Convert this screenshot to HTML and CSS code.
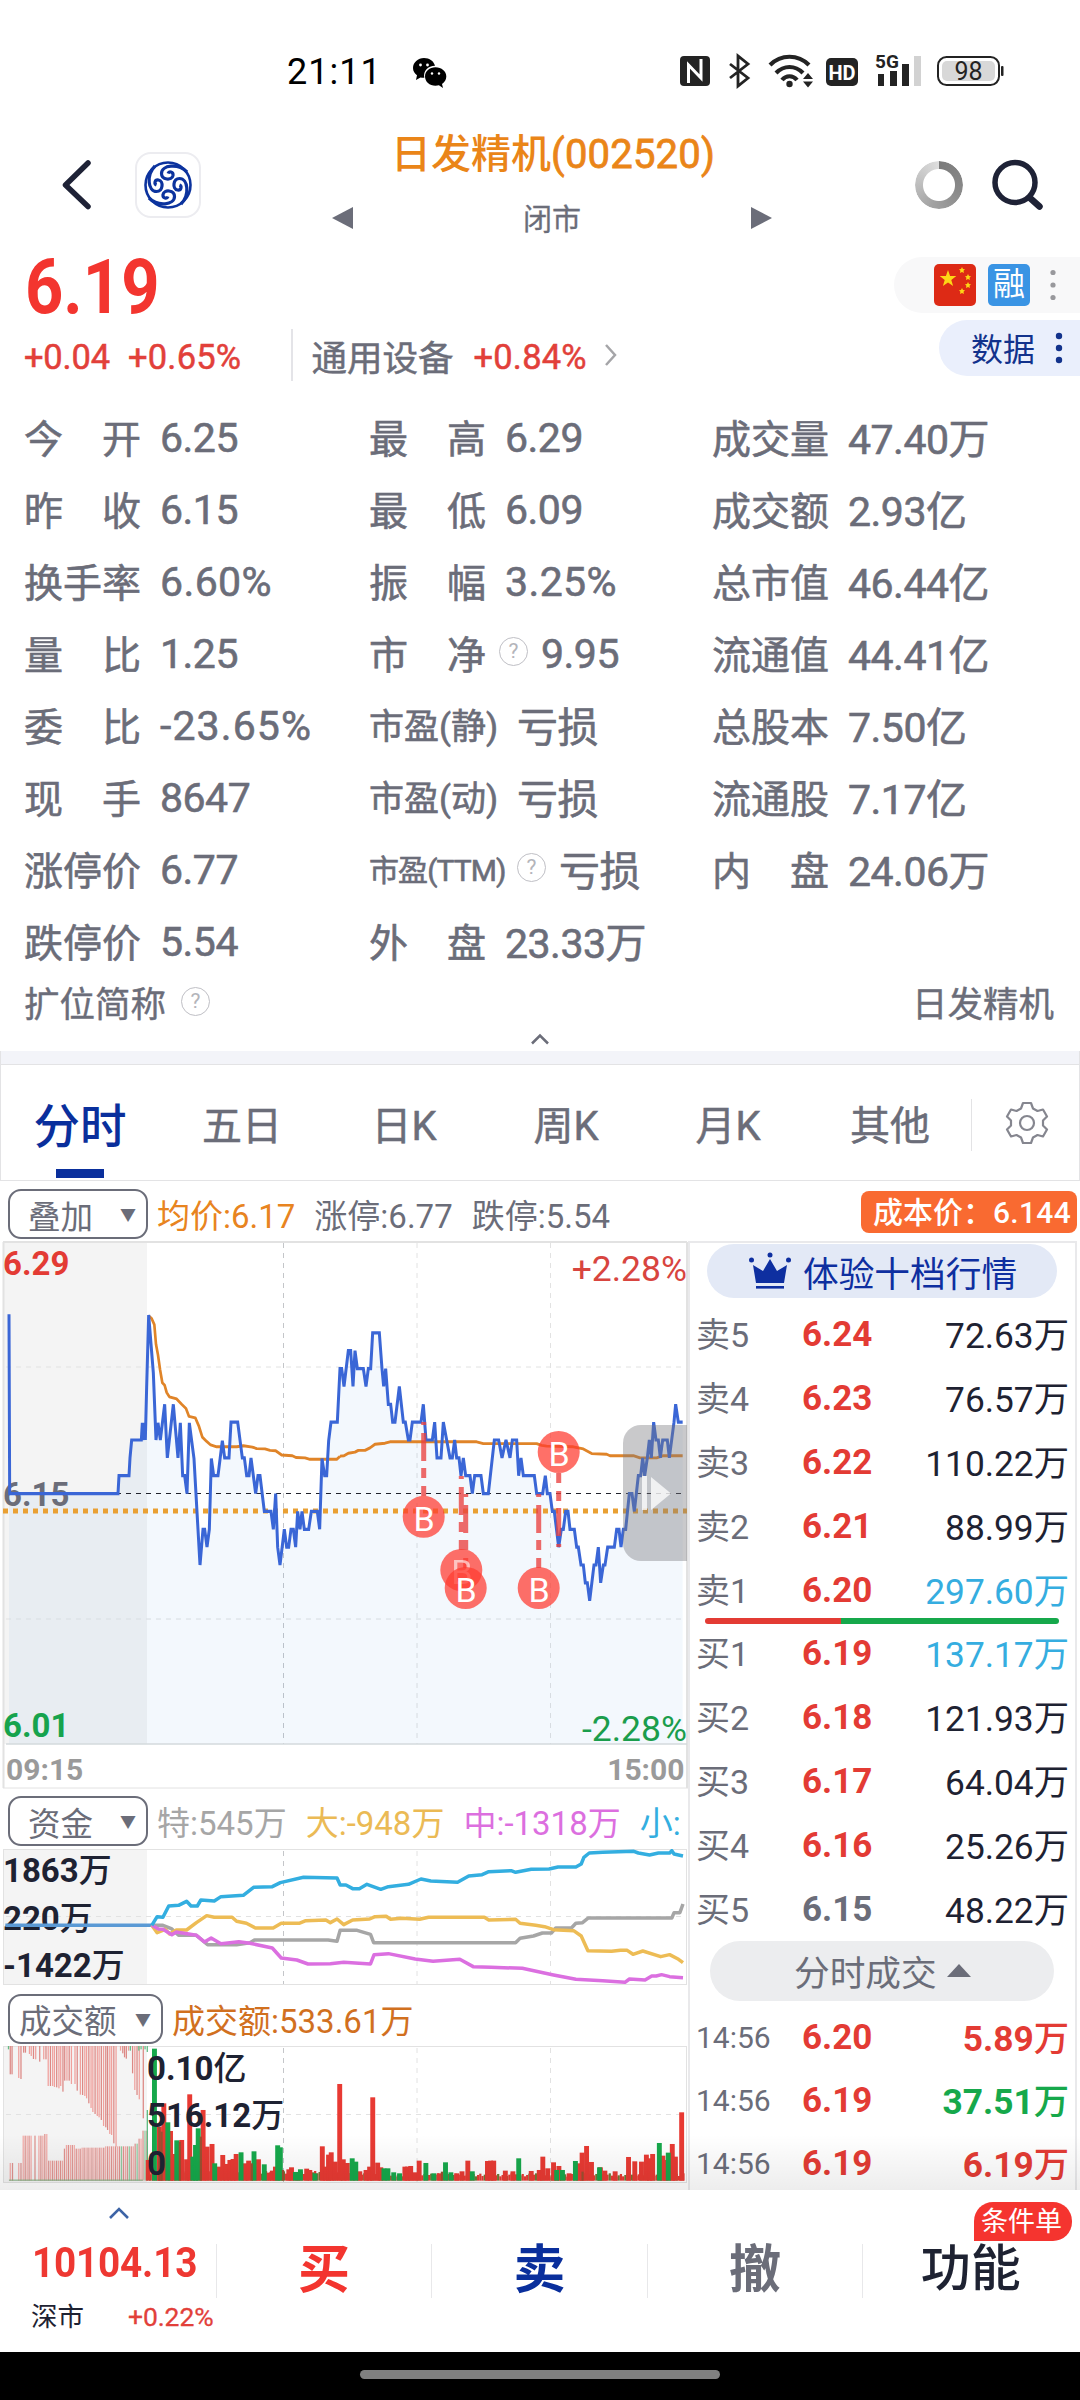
FILE: index.html
```html
<!DOCTYPE html>
<html lang="zh-CN">
<head>
<meta charset="utf-8">
<title>日发精机(002520)</title>
<link rel="stylesheet" href="styles.css">
</head>
<body>
<div class="status">
  <div class="clock">21:11</div>
  <svg class="wechat" width="34" height="30" viewBox="0 0 34 30"><path d="M11 0C5 0 0 4.500 0 10c0 3 1.500 5.500 4 7.300L3 22l4.500-2.600c1.200.3 2.500.5 3.800.4C10 13 15 8 22 7.800 21 3.200 16.500 0 11 0z"/><path d="M22.500 9.300c-6 0-10.500 4.100-10.500 9.200s4.500 9.200 10.500 9.200c1.200 0 2.400-.2 3.400-.5L30 30l-1-4c2.600-1.800 4.300-4.500 4.300-7.500 0-5.100-4.800-9.200-10.800-9.200z"/><g fill="#fff"><circle cx="7.500" cy="7" r="1.400"/><circle cx="14.500" cy="7" r="1.400"/><circle cx="19" cy="15.500" r="1.200"/><circle cx="26" cy="15.500" r="1.200"/></g></svg>
  <svg class="sys" width="330" height="40" viewBox="676 50 330 40" fill="#232323">
    <rect x="680" y="56" width="30" height="30" rx="4"/><path d="M688.500 83V65l12.500 13V59" fill="none" stroke="#fff" stroke-width="3"/>
    <path d="M730 64l18 14-10 8V56l10 8-18 14" fill="none" stroke="#232323" stroke-width="2.800"/>
    <g fill="none" stroke="#232323" stroke-width="4.200"><path d="M770 65c11-11 28-11 39 0"/><path d="M776 73c8-8 19-8 27 0"/><path d="M782 80c4-5 11-5 15 0"/></g><circle cx="789.500" cy="84" r="3.200"/><path d="M803 79l5-6 5 6zm0 2.500h10l-5 6z"/>
    <rect x="826" y="58" width="32" height="28" rx="5"/><text x="842" y="79.500" class="hd" fill="#fff">HD</text>
    <text x="875" y="68" class="g5">5G</text>
    <path d="M878 74h6v12h-6zM890 71h7v15h-7zM902 64h7v22h-7z"/><path d="M914 56h7v30h-7z" fill="#d2d2d2"/>
    <rect x="938" y="57" width="61" height="28" rx="8.500" fill="#fff" stroke="#232323" stroke-width="2"/><rect x="942" y="61" width="53" height="20" rx="5" fill="#d8d8d8"/><rect x="1001" y="66" width="2.500" height="10" rx="1"/><text x="968.500" y="80" class="bat">98</text>
  </svg>
</div>

<header class="head">
  <svg class="back" width="30" height="52" viewBox="62 159 30 52"><path d="M88 163L65.500 185 88 206.500" fill="none" stroke="#1e2236" stroke-width="5.500" stroke-linecap="round" stroke-linejoin="round"/></svg>
  <div class="logo"><svg width="52" height="52" viewBox="-26 -26 52 52"><g fill="none" stroke="#0c339e" stroke-width="3.200"><circle r="22.500" stroke-width="2.600"/><path id="s" d="M19-13C10-22-6.500-20-6.500-11.500-6.500-5 4-4 5-9.500 5.500-13.500 1-14 0-11.500"/><use href="#s" transform="rotate(90)"/><use href="#s" transform="rotate(180)"/><use href="#s" transform="rotate(270)"/></g></svg></div>
  <div class="title">
    <div class="name">日发精机<span>(002520)</span></div>
    <div class="sub"><svg width="21" height="22"><path d="M21 0v22L0 11z" fill="#6b6d79"/></svg><span>闭市</span><svg width="21" height="22"><path d="M0 0v22l21-11z" fill="#6b6d79"/></svg></div>
  </div>
  <div class="ring"></div>
  <svg class="search" width="54" height="54" viewBox="990 158 54 54"><circle cx="1015" cy="182.500" r="20" fill="none" stroke="#1e2236" stroke-width="5.500"/><path d="M1030 198l9.500 8.500" stroke="#1e2236" stroke-width="6.500" stroke-linecap="round"/></svg>
</header>

<section class="quote">
  <div class="left">
    <div class="price">6.19</div>
    <div class="chg"><span class="c1">+0.04</span><span class="c2">+0.65%</span><i></i><b>通用设备</b><span class="c3">+0.84%</span><svg width="14" height="22" viewBox="0 0 14 22"><path d="M2 1l9 10-9 10" fill="none" stroke="#a5a5a8" stroke-width="2.500"/></svg></div>
  </div>
  <div class="pills">
    <div class="pill1"><svg width="42" height="42" viewBox="0 0 42 42"><rect width="42" height="42" rx="5" fill="#dd2a15"/><g fill="#fdd616"><path d="M14 6l2.100 6h6.200l-5 3.900 1.800 6.100L14 18.400 8.900 22l1.800-6.100-5-3.900h6.200z"/><path d="M28 3l1 2 2 .3-1.500 1.500.4 2.200-1.900-1-2 1 .4-2.200L25 5.300l2-.3zM34 10l1 2 2 .3-1.500 1.500.4 2.200-1.900-1-2 1 .4-2.200-1.400-1.500 2-.3zM34 18l1 2 2 .3-1.500 1.500.4 2.200-1.900-1-2 1 .4-2.200-1.400-1.500 2-.3zM28 24l1 2 2 .3-1.500 1.500.4 2.200-1.900-1-2 1 .4-2.200-1.400-1.500 2-.3z"/></g></svg><span class="rong">融</span><svg width="8" height="34"><g fill="#98989c"><circle cx="4" cy="4.500" r="2.600"/><circle cx="4" cy="17" r="2.600"/><circle cx="4" cy="29.500" r="2.600"/></g></svg></div>
    <div class="pill2"><span>数据</span><svg width="8" height="34"><g fill="#12328c"><circle cx="4" cy="5" r="3.200"/><circle cx="4" cy="17" r="3.200"/><circle cx="4" cy="29" r="3.200"/></g></svg></div>
  </div>
</section>

<section class="stats">
  <div><label><u>今</u><u>开</u></label><em>6.25</em></div><div><label><u>最</u><u>高</u></label><em>6.29</em></div><div><label>成交量</label><em class="cn">47.40万</em></div>
  <div><label><u>昨</u><u>收</u></label><em>6.15</em></div><div><label><u>最</u><u>低</u></label><em>6.09</em></div><div><label>成交额</label><em class="cn">2.93亿</em></div>
  <div><label>换手率</label><em class="pc">6.60%</em></div><div><label><u>振</u><u>幅</u></label><em class="pc">3.25%</em></div><div><label>总市值</label><em class="cn">46.44亿</em></div>
  <div><label><u>量</u><u>比</u></label><em>1.25</em></div><div><label><u>市</u><u>净</u></label><q>?</q><em class="q1">9.95</em></div><div><label>流通值</label><em class="cn">44.41亿</em></div>
  <div><label><u>委</u><u>比</u></label><em class="neg">-23.65%</em></div><div><label class="pe">市盈(静)</label><em class="cn loss">亏损</em></div><div><label>总股本</label><em class="cn">7.50亿</em></div>
  <div><label><u>现</u><u>手</u></label><em>8647</em></div><div><label class="pe">市盈(动)</label><em class="cn loss">亏损</em></div><div><label>流通股</label><em class="cn">7.17亿</em></div>
  <div><label>涨停价</label><em>6.77</em></div><div><label class="ttm">市盈(TTM)</label><q>?</q><em class="cn q2">亏损</em></div><div><label><u>内</u><u>盘</u></label><em class="cn">24.06万</em></div>
  <div><label>跌停价</label><em>5.54</em></div><div><label><u>外</u><u>盘</u></label><em class="cn">23.33万</em></div>
</section>
<div class="alias"><span>扩位简称</span><q>?</q><span class="r">日发精机</span></div>
<div class="fold"><svg width="20" height="12"><path d="M2 10.500l8-8 8 8" fill="none" stroke="#6b6d79" stroke-width="2.500"/></svg></div>

<nav class="tabs">
  <a class="on">分时</a><a>五日</a><a>日K</a><a>周K</a><a>月K</a><a>其他</a>
  <div class="gear"><svg width="46" height="46" viewBox="-23 -23 46 46" fill="none" stroke="#85868f" stroke-width="2.200" stroke-linejoin="round"><path d="M-4-20H4L6-14.500 10.500-12 16-13.500 20-6.500 16-2.500V2.500L20 6.500 16 13.500 10.500 12 6 14.500 4 20H-4L-6 14.500-10.500 12-16 13.500-20 6.500-16 2.500V-2.500L-20-6.500-16-13.500-10.500-12-6-14.500z"/><circle r="7"/></svg></div>
</nav>

<div class="info top"><span class="sel">叠加<i>▼</i></span><span class="or">均价:6.17</span><span>涨停:6.77</span><span>跌停:5.54</span><span class="cost">成本价：<b>6.144</b></span></div>

<main class="board">
  <div class="charts">
    <svg class="ch" width="688" height="548" viewBox="0 1241 688 548">
      <rect x="4" y="1242" width="143" height="502" fill="#f4f4f4"/>
      <g stroke="#e2e2e2" fill="none"><path d="M3 1242H687" stroke-width="2"/><path d="M3.500 1242V1788M687 1242V1788" stroke-width="2"/><path d="M3 1788H688"/><path d="M283.500 1243V1744" stroke="#c4c6c9" stroke-dasharray="5 5"/><path d="M417 1243V1744M550.500 1243V1744M6 1367H682M6 1619H682" stroke-dasharray="5 5"/></g>
      <g transform="translate(0 1230) scale(.33333 .35714)">
        <path fill="#2f8fd8" fill-opacity=".06" d="M27 1440V738H354L357 688H387L395 588H436L446 238L468 588H481L494 488L502 638L520 488L534 638L541 540L548 688L561 738L568 540L582 640L600 938L609 838L621 888L634 640L654 688L667 590L674 638H687L693 538H713L727 638L740 688L753 638L767 738L780 688L793 788H813L820 838L827 738L840 938L853 838L860 888L880 838L887 888L893 788L913 838H926L934 788H952L959 838L966 640L980 688L993 538H1012L1020 388V1440z"/>
        <path fill="#2f8fd8" fill-opacity=".06" transform="translate(1020)" d="M0 1440V388L12 438L27 338L39 438L45 338L52 388H70L78 438L98 288H118L131 438L137 388L145 488L158 538L178 438L190 538L205 588L217 538H243L250 488L258 588H277L284 538L291 638H303L310 538L330 638L344 588L363 688L370 638L377 688H390L397 738L404 688H423L430 738H445L463 588L486 638L517 588H530L536 688H583L590 738H608L616 688L630 738L656 888L677 788L690 838H703L723 938L749 1038L775 888L782 988L803 888H823L837 838L843 888L868 738L883 788L908 638L928 588L941 538L961 638L982 588L988 638L1007 488L1015 538H1028V1440z"/>
      </g>
      <path d="M6 1744H687" stroke="#d5dadd" stroke-width="1.500"/>
      <path d="M6 1493.500H682" stroke="#20222c" stroke-dasharray="5 5"/>
      <path d="M3 1511H687" stroke="#e9a033" stroke-width="5" stroke-dasharray="5 5"/>
      <g class="t"><text class="b" x="3" y="1275" fill="#e33b34">6.29</text><text class="b" x="3" y="1506" fill="#6b6d79">6.15</text><text class="b" x="3" y="1737" fill="#16a34d">6.01</text><text class="e" x="687" y="1281" fill="#d8453f">+2.28%</text><text class="e" x="687" y="1741" fill="#1a9d4c">-2.28%</text><text class="d" x="6" y="1780">09:15</text><text class="d e2" x="684.500" y="1780">15:00</text></g>
      <g transform="translate(0 1230) scale(.33333 .35714)" fill="none" stroke-linejoin="round">
        <g stroke="#e08428" stroke-width="8"><path d="M446 240L455 248L463 265L468 320L474 350L480 390L487 428L494 435L500 455L508 467L530 473L545 488L558 500L567 522L586 526L597 550L607 580L620 592L632 602L650 607H710L730 604L757 608L770 612L795 613L810 617L827 618L845 630L877 632L888 637L915 638L930 642H1010L1020 634"/><path transform="translate(1020)" d="M0 633L12 632L25 625L45 622L55 617L75 617L90 610L105 600L135 597L150 593H410L430 598H590L605 603L620 605L700 607L730 613L755 626L800 628L810 632H880L900 638H950L970 632H1028"/></g>
        <g stroke="#3a66d6" stroke-width="9" stroke-linejoin="miter" stroke-miterlimit="2"><path d="M27 236L29 738H354L357 688H387L390 638L395 588H424L427 540L431 588L433 540L436 588L440 438L446 238L460 400L468 588L474 540L481 588L494 488L502 638L520 488L534 638L541 540L548 688H554L561 738L568 540L582 640L600 938L609 838H614L621 888L628 838L634 640L641 688H654L667 590L674 638H687L693 538H713L727 638H733L740 688H747L753 638L767 738L774 688H780L793 788H813L820 838L827 738L833 888L840 938L853 838L860 888H866L873 838H880L887 888L893 788L900 838L906 788L913 838H926L934 788H952L959 838L966 640L974 688H980L986 590L993 538H1012L1020 388L1025 388"/><path transform="translate(1020)" d="M0 388H5L12 438L25 338H32L39 438L45 338L52 388H70L78 438L85 388H92L98 288H118L126 388L131 438L137 388L145 488H152L158 538H165L178 438L190 538H196L205 588H210L217 538H243L250 488L258 588H277L284 538L291 638H303L310 538L320 588L330 638H337L344 588L350 638H357L363 688L370 638L377 688H390L397 738L404 688H423L430 738H445L463 588H476L486 638L498 588L510 638L517 588H530L536 688L543 638L550 688H583L590 738H608L616 688L622 738H630L637 788H643L656 888L664 838H670L677 788H684L690 838H703L710 888H715L723 938H730L736 988H742L749 1038L762 938H768L775 888L782 988L790 938H795L803 888H823L830 838H837L843 888L850 838H857L868 738H876L883 788L895 688H902L908 638L914 688L922 638L928 588L934 638L941 538L948 588H955L961 638L968 588H982L988 638L1002 538L1007 488L1015 538H1028"/></g>
      </g>
      <g stroke="#e9403f" stroke-opacity=".78" stroke-width="5" fill="none" stroke-dasharray="28 7 10 8" stroke-dashoffset="42"><path d="M423.700 1422V1496M461.300 1476V1550M465.700 1494V1568M538.700 1494V1568M558.700 1547V1473"/></g>
      <g class="mk"><circle cx="423.700" cy="1516.800" r="21"/><text x="424.200" y="1531">B</text><circle cx="461.300" cy="1570" r="21"/><text x="461.800" y="1584" opacity=".6">B</text><circle cx="465.700" cy="1588" r="21"/><text x="466.200" y="1602">B</text><circle cx="538.700" cy="1588" r="21"/><text x="539.200" y="1602">B</text><circle cx="558.700" cy="1452" r="21"/><text x="559.200" y="1466">B</text></g>
      <path d="M687 1425H641a18 18 0 0 0-18 18V1543a18 18 0 0 0 18 18H687z" fill="#77797e" fill-opacity=".4"/><path d="M642 1476h5v34h-5zM651 1477l20 16.500L651 1510z" fill="#fff" fill-opacity=".75"/>
    </svg>
    <div class="info"><span class="sel">资金<i>▼</i></span><span class="gy">特:545万</span><span class="ye">大:-948万</span><span class="pk">中:-1318万</span><span class="bl">小:</span></div>
    <svg class="ch" width="688" height="136" viewBox="0 1849 688 136">
      <rect x="4" y="1849" width="143" height="135" fill="#f4f4f4"/>
      <g stroke="#e2e2e2" fill="none"><rect x="3.500" y="1849.500" width="683" height="135"/><path d="M283.500 1851V1984" stroke="#c4c6c9" stroke-dasharray="5 5"/><path d="M417 1851V1984M550.500 1851V1984M6 1916.500H684" stroke-dasharray="5 5"/></g>
      <g class="t2"><text x="3" y="1882">1863<tspan>万</tspan></text><text x="3" y="1929.500">220<tspan>万</tspan></text><text x="3" y="1977">-1422<tspan>万</tspan></text></g>
      <g class="fl" transform="translate(0 1780) scale(.4464 .3333)">
        <path stroke="#5b9ad5" d="M12 436H340"/>
        <path stroke="#a6a6a6" d="M340 436H365L385 447L400 466H440L465 494H530L560 488L570 480H735L755 484L762 451H800L830 463L837 488H1155L1165 475L1195 468L1215 459H1235L1245 444H1280L1290 430L1305 428L1318 414H1505L1510 398H1523L1530 372"/>
        <path stroke="#edbc55" d="M340 436L352 458L370 448L380 462L395 450H418L440 428L463 407L480 412H520L530 424L552 430L572 444H612L630 430H670L685 422L730 420L740 428L755 417L770 434L790 420L828 417L840 410L865 409L875 418L900 415L940 418L960 412H1085L1095 420L1155 418L1165 430L1200 436L1220 440L1240 449L1285 452L1302 468L1317 512L1370 514L1390 511H1405L1418 523L1440 513L1480 530L1500 524L1520 538L1530 548"/>
        <path stroke="#db6fe0" d="M340 436L355 447L365 448L385 464L395 456L440 466L458 486L473 474L495 491L535 485L560 490L610 504L630 534L665 540L690 552L740 551L770 547L830 552L838 524L870 521L930 537L970 544L1030 538L1060 560L1100 562L1170 565L1240 585L1290 598L1350 602L1400 607L1410 597L1445 600L1460 588H1470L1482 584L1500 590L1530 593"/>
        <path stroke="#33aee0" d="M340 436L352 410L365 412L378 378L400 376L418 364L428 378H442L450 360L480 363L495 350L545 346L568 322L610 320L628 308L680 292L755 294L762 315H775L790 326H805L822 313L853 328L870 320L915 313L943 297L965 303L1025 307L1050 288L1080 284L1095 275L1145 272L1155 277L1190 268L1230 267L1250 261L1290 261L1302 252L1308 232L1320 219L1350 217L1420 214L1430 219L1455 225L1475 219H1500L1505 212L1510 222L1530 228"/>
      </g>
    </svg>
    <div class="info vol"><span class="sel w">成交额<i>▼</i></span><span class="br">成交额:533.61万</span></div>
    <svg class="ch" width="688" height="144" viewBox="0 2046 688 144">
      <rect x="4" y="2046" width="143" height="136" fill="#f4f4f4"/>
      <g stroke="#e2e2e2" fill="none"><rect x="3.500" y="2046.500" width="683" height="136"/><path d="M283.500 2048V2182" stroke="#c4c6c9" stroke-dasharray="5 5"/><path d="M417 2048V2182M550.500 2048V2182M6 2114.500H684" stroke-dasharray="5 5"/></g>
      <g id="bars" transform="translate(0 1980) scale(.4464 .3333)"></g>
      <g class="t2"><text x="147" y="2080">0.10<tspan>亿</tspan></text><text x="147" y="2127">516.12<tspan>万</tspan></text><text x="147" y="2175">0</text></g>
    </svg>
  </div>
  <aside class="book">
    <div class="ten"><svg width="42" height="38" viewBox="0 0 42 38" fill="#0e2fa0"><path d="M4 13l10 6 7-12 7 12 10-6-3 18H7z"/><rect x="7" y="34" width="28" height="2.600"/><circle cx="2.500" cy="8" r="2.500"/><circle cx="21" cy="3" r="2.500"/><circle cx="39.500" cy="8" r="2.500"/></svg>体验十档行情</div>
    <div class="rows">
      <p><span>卖5</span><b>6.24</b><em>72.63万</em></p><p><span>卖4</span><b>6.23</b><em>76.57万</em></p><p><span>卖3</span><b>6.22</b><em>110.22万</em></p><p><span>卖2</span><b>6.21</b><em>88.99万</em></p><p><span>卖1</span><b>6.20</b><em class="sky">297.60万</em></p>
    </div>
    <div class="split"></div>
    <div class="rows buy">
      <p><span>买1</span><b>6.19</b><em class="sky">137.17万</em></p><p><span>买2</span><b>6.18</b><em>121.93万</em></p><p><span>买3</span><b>6.17</b><em>64.04万</em></p><p><span>买4</span><b>6.16</b><em>25.26万</em></p><p><span>买5</span><b class="flat">6.15</b><em>48.22万</em></p>
    </div>
    <div class="deal">分时成交<svg width="24" height="13"><path d="M0 13L12 0l12 13z" fill="#6b6d79"/></svg></div>
    <div class="rows ticks">
      <p><span>14:56</span><b>6.20</b><em class="up">5.89<i>万</i></em></p><p><span>14:56</span><b>6.19</b><em class="dn">37.51<i>万</i></em></p><p><span>14:56</span><b>6.19</b><em class="up">6.19<i>万</i></em></p>
    </div>
  </aside>
  <div class="fade"></div>
</main>

<footer class="bar">
  <div class="idx"><svg width="22" height="13"><path d="M2 11l9-9 9 9" fill="none" stroke="#3d64a6" stroke-width="2.600"/></svg><div class="pt">10104.13</div><div class="mk2"><span>深市</span><b>+0.22%</b></div></div>
  <div class="act buyc">买</div><div class="act sellc">卖</div><div class="act canc">撤</div><div class="act func">功能<span class="tag">条件单</span></div>
</footer>
<div class="homebar"><i></i></div>
<script src="bars.js"></script>
</body>
</html>
```
FILE: styles.css
```css
*{box-sizing:border-box}
body{margin:0;width:1080px;height:2400px;overflow:hidden;background:#fff;color:#6b6d79;font-family:Roboto,"Noto Sans CJK SC",sans-serif}
svg{display:block;flex:none}
em,i,u{font-style:normal;text-decoration:none}
.status{height:120px;display:flex;padding-top:50px;align-items:flex-start}
.clock{margin-left:287px;width:126px;font-size:36px;line-height:44px;color:#000;letter-spacing:1px}
.wechat{margin-top:8px}
.sys{margin-left:229px}
.sys .hd{font:700 20px Roboto;text-anchor:middle}
.sys .g5{font:700 19px Roboto}
.sys .bat{font:400 25px Roboto;text-anchor:middle}
.head{height:130px;display:flex;align-items:flex-start}
.back{margin:39px 0 0 62px}
.logo{margin:32px 0 0 43px;width:66px;height:66px;border:2px solid #ececf0;border-radius:16px;display:flex;align-items:center;justify-content:center}
.title{width:440px;margin-left:131px}
.name{margin-left:59px;font-size:40px;line-height:50px;font-weight:500;color:#ea8518;margin-top:10px;white-space:nowrap}
.name span{font-weight:400;letter-spacing:.2px;-webkit-text-stroke:.8px}
.sub{display:flex;justify-content:space-between;align-items:center;height:40px;margin-top:18px;font-size:29px}
.sub span{margin-top:-2px;-webkit-text-stroke:.3px}
.ring{width:48px;height:48px;border-radius:50%;margin:41px 0 0 143px;background:conic-gradient(#7b7b7b,#8a8a8a 30%,#a2a2a2 55%,#bdbdbd 75%,#dedede);-webkit-mask:radial-gradient(circle,transparent 15.500px,#000 16.500px)}
.search{margin:38px 0 0 27px}
.quote{height:152px;display:flex;justify-content:space-between}
.price{margin:0 0 0 25px;height:74px;font-size:76px;line-height:74px;font-weight:700;color:#f3352f;transform:scaleX(.88);transform-origin:0 0}
.chg{display:flex;align-items:center;height:52px;margin-top:5px;font-size:34.500px;color:#e2403a}
.chg span{margin-top:4px;-webkit-text-stroke:.5px}
.c1{width:104px;margin-left:24px;letter-spacing:-.2px}.c2{width:163px;letter-spacing:.2px}
.chg i{width:1.500px;height:52px;background:#e4e4e8}
.chg b{font-weight:400;font-size:35.500px;color:#6b6d79;margin-left:19px;width:162px;-webkit-text-stroke:.5px}
.c3{width:130px;letter-spacing:.2px}
.pills{padding-top:7px;display:flex;flex-direction:column;align-items:flex-end;gap:7px}
.pill1{width:186px;height:56px;border-radius:28px 0 0 28px;background:#f8f8f9;display:flex;align-items:center;padding-left:40px}
.rong{width:42px;height:42px;border-radius:5px;background:#3a94e4;color:#fff;font-size:32px;line-height:41px;text-align:center;margin:0 19px 0 12px}
.pill2{width:141px;height:56px;border-radius:28px 0 0 28px;background:#eaeffc;color:#12328c;font-size:32px;display:flex;align-items:center;padding-left:32px}
.pill2 span{width:84px;margin-top:-2px}
.stats{display:grid;grid-template-columns:345px 343px 1fr;grid-auto-rows:72px;padding-left:24px;height:576px;-webkit-text-stroke:.6px #6b6d79}
.stats div{display:flex;align-items:center;white-space:nowrap}
.stats label{width:117px;font-size:39px;display:flex;justify-content:space-between;margin-top:-5px}
.stats em{font-size:41px;margin-left:19px;letter-spacing:-.5px}
.stats .cn{margin-top:-5px}
.stats .pc{letter-spacing:.4px}
.stats .neg{letter-spacing:1.100px}
.stats .pe{font-size:35px;width:130px}
.stats .ttm{font-size:30px;width:134px;letter-spacing:-.9px;justify-content:flex-start}
.stats .loss{margin-left:18px}
.stats .q1{margin-left:13px}.stats .q2{margin-left:13px}
q{quotes:none;width:29px;height:29px;border:1.500px solid #bfbfc5;border-radius:50%;color:#b3b4ba;font-size:21px;line-height:26px;text-align:center;margin-left:13px;margin-top:-6px;-webkit-text-stroke:0}
.stats .ttm+q{margin-left:14px}
.alias{height:52px;display:flex;align-items:center;padding:0 26px 0 24px;font-size:35.500px;-webkit-text-stroke:.4px #6b6d79}
.alias span{margin-top:-5px}
.alias q{margin-left:15px}
.alias .r{margin-left:auto}
.fold{height:21px;display:flex;justify-content:center;padding-top:3px}
.tabs{border:1.500px solid #e3e3e5;border-top:0;height:130px;display:flex;padding-top:14px;background:linear-gradient(#f3f4f9 13px,#e3e3e5 13px,#e3e3e5 14px,#fff 14px)}
.tabs a{width:162px;height:115px;text-align:center;line-height:124px;font-size:40px;-webkit-text-stroke:.5px}
.tabs a.on{font-size:46.500px;font-weight:500;color:#0a2f9c;width:158px;margin-right:2px;-webkit-text-stroke:0;background:linear-gradient(#0a2f9c,#0a2f9c) 50% 104px/48px 9px no-repeat}
.gear{margin:34px 0 0 0;height:52px;border-left:1.500px solid #e3e3e5;padding:1px 0 0 32px}
.info{height:60px;display:flex;align-items:center;padding-left:8px;font-size:33px;white-space:nowrap;overflow:hidden}
.info>span{margin-right:19px;flex:none}
.info .sel{width:140px;height:50px;border:2px solid #6b6d79;border-radius:13px;display:flex;align-items:center;justify-content:space-between;padding:0 10px 0 18px;margin-right:9px;font-size:32.500px}
.info .sel.w{width:155px;padding-left:9px}
.top>span:not(.cost){position:relative;top:3px}
.sel i{font-size:16px}
.or{color:#e88420}.gy{color:#a6a6a6}.ye{color:#ebba55}.pk{color:#dc6fdf}.bl{color:#33aee0}.br{color:#d1701f}
.info .cost{margin:1px 3px 0 auto;width:216px;height:42px;border-radius:8px;background:#f96a31;color:#fff;font-size:30px;line-height:44px;padding-left:12px;font-weight:500;display:flex}
.cost b{font-weight:500;font-size:30px;letter-spacing:.3px}
.board{height:949px;display:flex;position:relative}
.charts{width:688px}
.charts .vol{height:61px;padding-top:6px}
.charts .info:not(.vol){padding-top:4px}
.ch text{font-family:Roboto,"Noto Sans CJK SC"}
.t .b{font-size:33px;font-weight:700}
.t .e{font-size:35.500px;text-anchor:end}
.t .d{font-size:30px;font-weight:700;fill:#9a9a9a}
.t .e2{text-anchor:end}
.mk circle{fill:#ff3b30;fill-opacity:.73}
.mk text{font-size:34px;fill:#fff;text-anchor:middle}
.t2 text{font-size:33px;font-weight:700;fill:#1e2232}
.t2 tspan{font-weight:500}
.fl path{fill:none;stroke-width:3.500;vector-effect:non-scaling-stroke;stroke-linejoin:round}
.book{width:389px;border:2px solid #e9e9eb;border-width:2px 2px 0 2px;padding:1px 0 0 7px}
.ten{margin-left:10px;width:350px;height:54px;border-radius:27px;background:#e3e9f6;color:#0e2fa0;font-size:35.700px;display:flex;align-items:center;padding-left:42px}
.ten svg{margin-right:12px}
.rows{padding:5px 6px 0 0}
.rows p{margin:0;height:63.800px;display:flex;align-items:center;font-size:35px}
.rows span{width:106px;font-size:34px;margin:-4px 0 0 -1px}
.rows b{color:#e33b34}
.rows .flat{color:#6b6d79}
.rows em{margin:-4px 0 0 auto;color:#1e2232;font-size:35.300px}
.rows .sky{color:#35ade0}
.split{height:6px;width:354px;margin:-4px 0 -2px 8px;border-radius:3px;background:linear-gradient(90deg,#e33b34 136px,#16a84b 136px)}
.buy{padding-top:0}
.deal{margin:0 0 0 13px;width:344px;height:60px;border-radius:30px;background:#ecedef;font-size:35.700px;display:flex;align-items:center;padding-left:84px}
.deal svg{margin-left:10px}
.ticks p{height:63px}
.ticks span{font-size:30px;margin-top:0}
.ticks em{font-weight:700}.ticks em i{font-weight:500}
.rows .up{color:#e33b34}.rows .dn{color:#16a84b}
.fade{position:absolute;left:0;right:0;bottom:0;height:56px;background:linear-gradient(rgba(0,0,0,0),rgba(0,0,0,.07))}
.bar{height:162px;display:grid;grid-template-columns:repeat(5,215.600px)}
.idx{padding:17px 0 0 32px}
.idx svg{margin-left:76px}
.pt{font-size:43px;line-height:54px;margin-top:15px;font-weight:700;color:#ee3832;transform:scaleX(.9);transform-origin:0 0;letter-spacing:-.2px}
.mk2{display:flex;font-size:26.500px;line-height:30px;margin:13px 0 0 -1px;color:#1e2232}
.mk2 b{font-weight:400;color:#e2403a;margin-left:44px;letter-spacing:-.1px;-webkit-text-stroke:.3px}
.act{position:relative;height:54px;margin-top:54px;border-left:1.500px solid #e8e8ea;text-align:center;font-size:52px;line-height:53px;font-weight:700}
.buyc{color:#f3352f}.sellc{color:#0a2f9c}.canc{color:#6b6d79}
.func{color:#1e2232;font-size:50px;font-weight:500;line-height:50px}
.tag{position:absolute;right:6px;top:-42px;width:98px;height:39px;border-radius:19px 19px 19px 0;background:#f5342f;color:#fff;font-size:27px;line-height:40px;font-weight:400;text-align:left;padding-left:7px}
.homebar{height:48px;background:#000;display:flex;justify-content:center;padding-top:18px}
.homebar i{width:360px;height:9px;border-radius:5px;background:#808080}
```
FILE: bars.js
```js
// Turnover bars: "x,top" pairs measured on a grid whose baseline is y=602.
const g = document.getElementById('bars');
const NS = 'http://www.w3.org/2000/svg';
function bar(x, y1, y2, w, color) {
  const r = document.createElementNS(NS, 'rect');
  r.setAttribute('x', x - w / 2);
  r.setAttribute('y', y1);
  r.setAttribute('width', w);
  r.setAttribute('height', Math.max(1, y2 - y1));
  r.setAttribute('fill', color);
  g.appendChild(r);
}
const RED = '#e83a33', GREEN = '#16a84b';
// Pre-open auction: matched volume hangs from the top, unmatched rises from the base.
const hang = [[23,283],[27,283],[42,294],[47,297],[53,218],[57,218],[66,222],[70,228],[75,237],[80,238],[89,245],[98,238],[103,238],[108,318],[113,318],[118,318],[122,321],[127,322],[132,325],[136,318],[141,335],[145,302],[150,302],[155,302],[160,312],[168,312],[173,332],[180,344],[185,345],[190,348],[194,355],[199,370],[204,384],[208,396],[213,402],[218,408],[222,412],[227,420],[232,438],[237,442],[241,450],[246,462],[250,465],[255,490],[260,500],[270,212],[275,220],[279,232],[283,236],[288,212],[297,280],[302,330],[307,345],[312,358],[321,415]];
hang.forEach(([x, y]) => bar(x, 198, y, 2.8, x % 2 ? '#dc8884' : '#f0a09c'));
[[19,208],[292,212],[311,212],[316,208],[325,208],[330,216]].forEach(([x, y]) => bar(x, 198, y, 2.8, '#63bd84'));
const rise = [[23,549],[28,549],[42,549],[47,549]];
for (let x = 52; x < 330; x += 4.4) {
  if ((x > 82 && x < 87) || (x > 74 && x < 77)) continue;
  const y = x < 100 ? 467 : x < 106 ? 462 : x < 142 ? 542 : x < 148 ? 506 : x < 170 ? 495 : x < 180 ? 506 : x < 233 ? 503 : x < 300 ? 499 : x < 310 ? 491 : x < 317 ? 476 : 452;
  rise.push([x, y]);
}
rise.forEach(([x, y], i) => bar(x, y, 602, 2.8, x > 255 && i % 4 === 0 ? '#8fca9f' : i % 2 ? '#de928e' : '#f3aaa7'));
bar(330, 390, 602, 2.8, '#57b97c');
bar(170, 599, 602, 300, '#7fae7f');

// Low background level, one bar per minute.
for (let i = 0; i < 240; i++) {
  const x = 336 + i * 5;
  const top = 590 - ((i * 37) % 11) - (i < 90 ? 7 : 0);
  bar(x, top, 602, 5, (i * 7) % 10 < 3 ? '#6d7a35' : RED);
}
const reds = '332,540 357,440 367,370 382,453 388,522 407,480 418,538 425,343 455,390 464,500 475,492 491,560 499,525 507,552 515,540 522,537 529,522 549,550 557,542 579,538 602,578 610,572 617,560 647,568 653,562 667,576 687,566 694,570 722,499 730,560 736,524 742,517 751,545 761,312 769,538 778,549 806,574 820,570 828,560 835,352 846,548 853,562 907,560 913,560 920,558 930,577 939,542 985,580 1023,580 1035,574 1048,542 1092,543 1099,542 1106,542 1132,572 1149,574 1190,573 1208,570 1216,530 1227,565 1240,547 1252,558 1275,580 1297,550 1304,518 1314,498 1325,546 1345,562 1355,572 1378,574 1408,531 1422,544 1437,545 1448,524 1455,535 1462,522 1485,527 1492,540 1506,492 1513,530 1527,397';
const greens = '346,206 376,427 396,481 432,530 438,495 444,445 481,550 540,517 569,514 592,553 622,496 628,502 662,576 673,568 706,580 789,535 797,545 860,565 869,565 882,577 895,580 954,549 972,580 998,547 1010,577 1058,574 1162,535 1247,570 1260,570 1289,543 1343,562 1477,489 1497,518';
function draw(list, color) {
  list.split(' ').forEach(p => { const [x, y] = p.split(',').map(Number); bar(x, y, 602, 11, color); });
}
draw(reds, RED);
draw(greens, GREEN);
[[357,440],[362,455],[403,485],[450,470],[564,550],[634,570],[990,575],[1305,575]].forEach(([x, y]) => bar(x, y, 602, 5, '#9c5030'));
```
